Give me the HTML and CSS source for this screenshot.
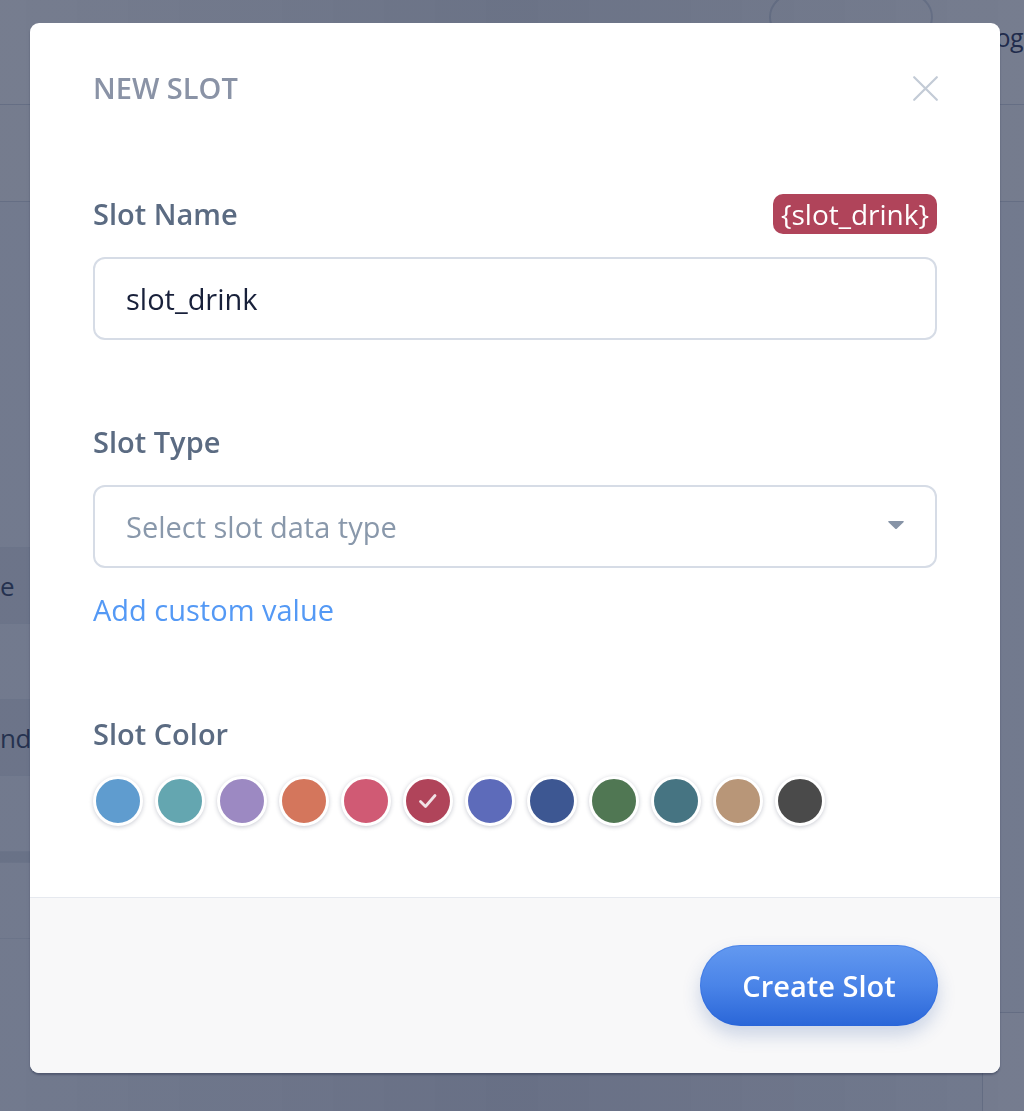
FILE: index.html
```html
<!DOCTYPE html>
<html lang="en">
<head>
<meta charset="utf-8">
<title>New Slot</title>
<link rel="stylesheet" href="styles.css">
</head>
<body>
<div class="app">
  <header class="topbar">
    <div class="ghost-btn"></div>
    <span class="user">Log</span>
  </header>
  <div class="subbar"></div>
  <div class="content">
    <div class="table">
      <div class="row"></div>
      <div class="row shaded"><span class="cell">e</span></div>
      <div class="row"></div>
      <div class="row shaded"><span class="cell">nds</span></div>
      <div class="row"></div>
      <div class="row thin"></div>
      <div class="row"></div>
    </div>
    <div class="side"></div>
  </div>
</div>

<div class="overlay">
  <div class="modal">
    <div class="modal-body">
      <div class="modal-head">
        <h2 class="title">NEW SLOT</h2>
        <button class="close" aria-label="Close">
          <svg width="25" height="25" viewBox="0 0 25 25"><path d="M1.2 1.2 L23.8 23.8 M23.8 1.2 L1.2 23.8" stroke="#c3cbd6" stroke-width="2.2" stroke-linecap="round" fill="none"/></svg>
        </button>
      </div>

      <div class="label-row name-label">
        <label class="label">Slot Name</label>
        <span class="badge">{slot_drink}</span>
      </div>
      <div class="field">slot_drink</div>

      <div class="label-row type-label">
        <label class="label">Slot Type</label>
      </div>
      <div class="field select">
        <span class="placeholder">Select slot data type</span>
        <svg class="caret" width="18" height="10" viewBox="0 0 18 10"><path d="M2 1 H16 Q17.5 1 16.5 2.2 L10 8.6 Q9 9.6 8 8.6 L1.5 2.2 Q0.5 1 2 1 Z" fill="#8794a7"/></svg>
      </div>
      <a class="link">Add custom value</a>

      <div class="label-row color-label">
        <label class="label">Slot Color</label>
      </div>
      <div class="swatches">
        <span class="swatch" style="background:#5f9ccf"></span>
        <span class="swatch" style="background:#64a6b0"></span>
        <span class="swatch" style="background:#9c89c2"></span>
        <span class="swatch" style="background:#d4765c"></span>
        <span class="swatch" style="background:#d05a74"></span>
        <span class="swatch" style="background:#b0445a">
          <svg width="26" height="26" viewBox="0 0 26 26"><path d="M5.5 13.5 L10.5 18.5 L20 7.5" stroke="#f1e2e6" stroke-width="2.8" stroke-linecap="round" stroke-linejoin="round" fill="none"/></svg>
        </span>
        <span class="swatch" style="background:#5d6bba"></span>
        <span class="swatch" style="background:#3d5792"></span>
        <span class="swatch" style="background:#507753"></span>
        <span class="swatch" style="background:#467482"></span>
        <span class="swatch" style="background:#b89678"></span>
        <span class="swatch" style="background:#4a4a4a"></span>
      </div>
    </div>
    <div class="modal-foot">
      <button class="primary">Create Slot</button>
    </div>
  </div>
</div>
</body>
</html>
```

FILE: styles.css
```css
* { box-sizing: border-box; }

html, body {
  margin: 0;
  padding: 0;
  height: 100%;
}

body {
  font-family: "Open Sans", "Noto Sans", sans-serif;
  background: #f5f7fb;
  overflow: hidden;
}

/* background app (dimmed) */
.app {
  height: 100%;
  display: flex;
  flex-direction: column;
}

.topbar {
  height: 105px;
  border-bottom: 1px solid #d2d8e2;
  display: flex;
  align-items: flex-start;
  justify-content: flex-end;
  background: #ffffff;
}

.ghost-btn {
  width: 164px;
  height: 46px;
  margin-top: -6px;
  border: 2px solid #d7dde6;
  border-radius: 24px;
  margin-right: 50px;
}

.user {
  margin-top: 20px;
  margin-right: 1px;
  font-size: 25px;
  letter-spacing: -0.5px;
  color: #1d2b4f;
  white-space: nowrap;
}

.subbar {
  height: 97px;
  border-bottom: 1px solid #d2d8e2;
  background: #fbfcfd;
}

.content {
  flex: 1;
  display: flex;
  padding-top: 270px;
}

.table {
  flex: 1;
}

.row {
  height: 76px;
  border-bottom: 1px solid #e2e6ee;
  display: flex;
  align-items: center;
}

.row.shaded {
  background: #e4e8f0;
}

.row.thin {
  height: 11px;
  background: #dde2ea;
}

.cell {
  font-size: 26px;
  color: #2c3a58;
  letter-spacing: -0.5px;
}

.side {
  width: 42px;
  border-left: 1px solid #cfd5df;
  margin-top: 540px;
  border-top: 1px solid #cfd5df;
  background: #fdfdfe;
}

/* overlay + modal */
.overlay {
  position: fixed;
  inset: 0;
  background: linear-gradient(90deg, rgba(34,45,74,0.62), rgba(30,42,72,0.66) 50%, rgba(34,45,74,0.62));
  padding: 23px 24px 0 30px;
}

.modal {
  width: 970px;
  background: #ffffff;
  border-radius: 9px;
  overflow: hidden;
  box-shadow: 0 2px 2px rgba(20, 30, 60, 0.35);
}

.modal-body {
  padding: 45px 63px 71px;
}

.modal-head {
  height: 40px;
  display: flex;
  align-items: center;
  justify-content: space-between;
}

.title {
  margin: 0;
  font-size: 29px;
  font-weight: 600;
  color: #8a93a6;
  line-height: 40px;
}

.close {
  border: 0;
  background: none;
  padding: 0;
  margin-right: -1px;
  width: 25px;
  height: 25px;
  display: flex;
}

.label-row {
  height: 40px;
  display: flex;
  align-items: center;
  justify-content: space-between;
}

.label-row.name-label {
  margin-top: 86px;
}

.label-row.type-label {
  margin-top: 82px;
}

.label-row.color-label {
  margin-top: 84px;
}

.label {
  font-size: 29px;
  font-weight: 600;
  color: #5b6b82;
  line-height: 36px;
}

.badge {
  background: #b0445a;
  color: #ffffff;
  font-size: 28px;
  line-height: 40px;
  height: 40px;
  padding: 0 8px;
  border-radius: 10px;
}

.field {
  margin-top: 23px;
  height: 83px;
  border: 2px solid #d6dce6;
  border-radius: 12px;
  display: flex;
  align-items: center;
  padding: 0 31px;
  font-size: 29px;
  color: #18203a;
}

.field.select {
  justify-content: space-between;
  padding-right: 30px;
}

.placeholder {
  color: #8998ab;
}

.caret {
  display: block;
  margin-top: -4px;
}

.link {
  display: block;
  margin-top: 22px;
  font-size: 29px;
  line-height: 40px;
  color: #5499f5;
  cursor: pointer;
}

.swatches {
  margin-top: 22px;
  display: flex;
  gap: 12px;
}

.swatch {
  width: 50px;
  height: 50px;
  border-radius: 50%;
  border: 3px solid #ffffff;
  box-shadow: 0 1px 4px rgba(30, 40, 70, 0.25);
  display: flex;
  align-items: center;
  justify-content: center;
}

.modal-foot {
  border-top: 1px solid #e6e9ef;
  background: #f8f8f9;
  padding: 47px 62px 47px;
  display: flex;
  justify-content: flex-end;
}

.primary {
  height: 81px;
  width: 238px;
  border: 0;
  border-radius: 41px;
  background: linear-gradient(180deg, #6399f0 0%, #4a84e8 50%, #2a66d8 100%);
  color: #ffffff;
  font-family: "Open Sans", "Noto Sans", sans-serif;
  font-size: 29px;
  font-weight: 600;
  box-shadow: 0 9px 18px rgba(40, 80, 160, 0.22), inset 0 0 0 1px rgba(40, 100, 220, 0.35);
}
```
